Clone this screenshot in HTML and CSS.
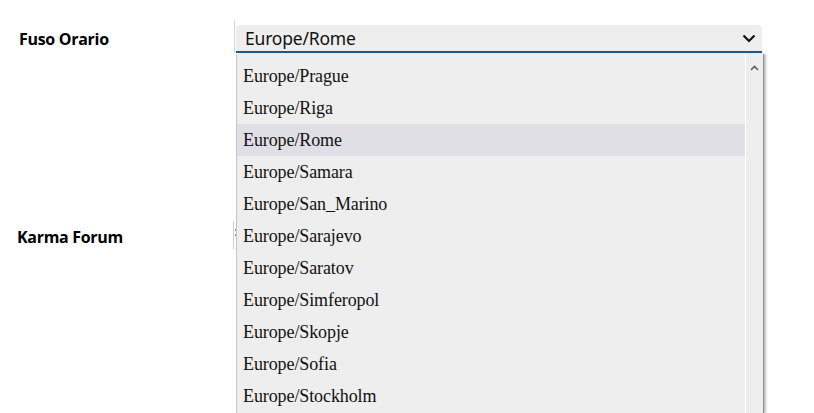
FILE: index.html
```html
<!DOCTYPE html>
<html>
<head>
<meta charset="utf-8">
<link rel="stylesheet" href="styles.css">
</head>
<body>
<div class="form">
  <div class="row row-tz">
    <div class="label">Fuso Orario</div>
    <div class="field">
      <div class="select">
        <span class="value">Europe/Rome</span>
        <svg class="chev" width="14" height="9" viewBox="0 0 14 9"><path d="M1.5 1.5 L7 7 L12.5 1.5" fill="none" stroke="#111" stroke-width="2.2"/></svg>
      </div>
    </div>
  </div>
  <div class="row row-karma">
    <div class="label">Karma Forum</div>
    <div class="field2"><span class="mark">:</span></div>
  </div>

  <div class="dropdown">
    <ul class="list">
      <li>Europe/Prague</li>
      <li>Europe/Riga</li>
      <li class="sel">Europe/Rome</li>
      <li>Europe/Samara</li>
      <li>Europe/San_Marino</li>
      <li>Europe/Sarajevo</li>
      <li>Europe/Saratov</li>
      <li>Europe/Simferopol</li>
      <li>Europe/Skopje</li>
      <li>Europe/Sofia</li>
      <li>Europe/Stockholm</li>
    </ul>
    <div class="scrollbar">
      <svg class="up" width="9" height="6" viewBox="0 0 9 6"><path d="M1 5 L4.5 1.5 L8 5" fill="none" stroke="#606060" stroke-width="1.6"/></svg>
    </div>
  </div>
</div>
</body>
</html>
```
FILE: styles.css
```css
html, body {
  margin: 0;
  padding: 0;
  background: #ffffff;
  width: 814px;
  height: 413px;
  overflow: hidden;
}
.form {
  position: relative;
  width: 814px;
  height: 413px;
  overflow: hidden;
  font-family: "Open Sans", "Noto Sans", sans-serif;
}
.row {
  display: flex;
  align-items: flex-start;
}
.row-tz {
  padding-top: 20px;
  height: 33px;
}
.label {
  width: 234px;
  padding-left: 19px;
  box-sizing: border-box;
  font-weight: 700;
  font-size: 16px;
  color: #000;
  letter-spacing: -0.3px;
}
.row-tz .label {
  padding-top: 8px;
}
.field {
  border-left: 1px solid #d6d6d6;
  height: 33px;
  padding-left: 1px;
}
.select {
  margin-top: 5px;
  width: 526px;
  height: 26px;
  background: #eeeeee;
  border-radius: 4px 4px 0 0;
  border-bottom: 2px solid #1b5b84;
  display: flex;
  align-items: center;
  justify-content: space-between;
  box-sizing: content-box;
}
.value {
  padding-left: 9px;
  font-size: 17.5px;
  color: #111;
  font-family: "Noto Sans", "Open Sans", sans-serif;
  letter-spacing: -0.2px;
}
.chev {
  margin-right: 6px;
  margin-top: 1px;
}
.row-karma {
  margin-top: 168px;
}
.row-karma .label {
  padding-left: 17px;
  padding-top: 5px;
}
.field2 {
  margin-left: -1px;
  border-left: 1px solid #cfcfcf;
  height: 28px;
  width: 2px;
  position: relative;
}
.mark {
  position: absolute;
  left: 0px;
  top: 3px;
  font-size: 14px;
  font-family: "Liberation Serif", serif;
  color: #333;
}
.dropdown {
  position: absolute;
  left: 236px;
  top: 54px;
  width: 526px;
  height: 359px;
  background: #eeeeee;
  border-left: 1px solid #c6c6c6;
  border-right: 1px solid #8d8d8d;
  box-shadow: 2px 0 2px rgba(0,0,0,0.25);
  display: flex;
  overflow: hidden;
}
.list {
  list-style: none;
  margin: 0;
  padding: 6px 0 0 0;
  width: 508px;
  font-family: "Liberation Serif", "Times New Roman", serif;
  font-size: 18px;
  color: #111;
  letter-spacing: -0.1px;
}
.list li {
  height: 32px;
  line-height: 32px;
  padding-left: 6px;
}
.list li.sel {
  background: #e0dfe5;
}
.scrollbar {
  width: 17px;
  border-left: 1px solid #ffffff;
  background: #eeeeee;
  display: flex;
  justify-content: center;
  align-items: flex-start;
  padding-top: 11px;
  box-sizing: border-box;
}
```
